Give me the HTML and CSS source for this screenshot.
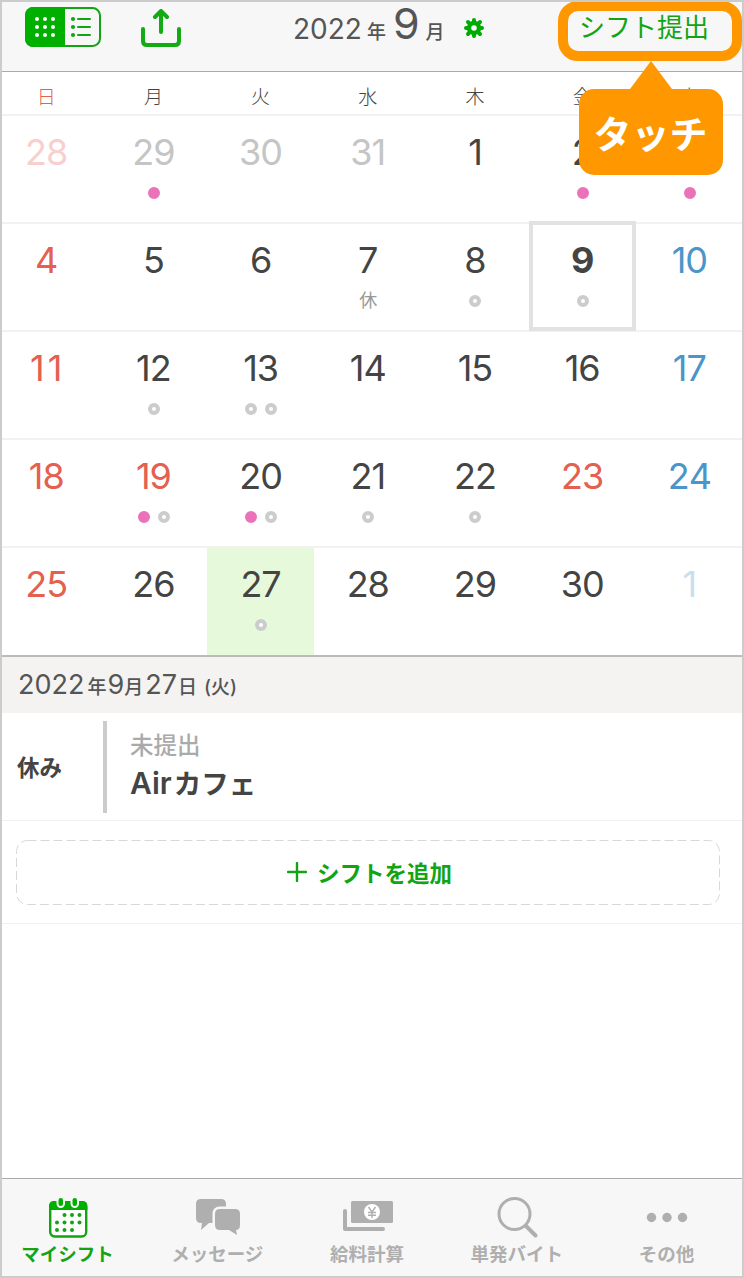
FILE: index.html
```html
<!DOCTYPE html>
<html lang="ja">
<head>
    <meta charset="UTF-8">
    <meta name="viewport" content="width=device-width, initial-scale=1.0">
    <title>シフト</title>
    <link rel="stylesheet" href="styles.css">
</head>
<body>
    <div class="app">
        <header class="header">
            <div class="view-switch">
                <svg width="76" height="40" viewBox="0 0 76 40">
                    <rect x="1" y="1" width="74" height="38" rx="7.5" fill="none" stroke="#13a413" stroke-width="2"/>
                    <path d="M8 0h32v40H8a8 8 0 0 1-8-8V8a8 8 0 0 1 8-8z" fill="#00b000"/>
                    <g fill="#fff">
                        <circle cx="12" cy="12" r="2"/><circle cx="20" cy="12" r="2"/><circle cx="28" cy="12" r="2"/>
                        <circle cx="12" cy="20" r="2"/><circle cx="20" cy="20" r="2"/><circle cx="28" cy="20" r="2"/>
                        <circle cx="12" cy="28" r="2"/><circle cx="20" cy="28" r="2"/><circle cx="28" cy="28" r="2"/>
                    </g>
                    <g fill="#13a413">
                        <circle cx="48" cy="12" r="2.1"/><circle cx="48" cy="20" r="2.1"/><circle cx="48" cy="28" r="2.1"/>
                    </g>
                    <path d="M53 12h12M53 20h12M53 28h12" stroke="#13a413" stroke-width="2" stroke-linecap="round"/>
                </svg>
            </div>
            <svg class="share" width="40" height="38" viewBox="0 0 40 38" fill="none" stroke="#13ab13" stroke-width="4" stroke-linecap="round">
                <path d="M2 20v12q0 4 4 4h28q4 0 4-4V20"/>
                <path d="M20 23V3M14 8l6-6 6 6" stroke-linejoin="round"/>
            </svg>
            <div class="month"><span class="year">2022</span><span class="unit unit-year">年</span><span class="big">9</span><span class="unit unit-month">月</span></div>
            <svg class="gear" width="20" height="20" viewBox="-10 -10 20 20">
                <g fill="none" stroke="#00ab00">
                    <circle r="5" stroke-width="4.4"/>
                    <path d="M0-6V-8M0 6V8M-6 0H-8M6 0H8M-4.4-4.4L-6-6M4.4-4.4L6-6M-4.4 4.4L-6 6M4.4 4.4L6 6" stroke-width="4" stroke-linecap="round"/>
                </g>
            </svg>
            <div class="submit">シフト提出</div>
            <div class="highlight"></div>
            <div class="callout">タッチ</div>
        </header>

        <div class="weekdays">
            <div class="red">日</div><div>月</div><div>火</div><div>水</div><div>木</div><div>金</div><div>土</div>
        </div>

        <div class="calendar">
            <div class="day red faded"><span>28</span></div>
            <div class="day faded"><span>29</span><p><i class="dot pink"></i></p></div>
            <div class="day faded"><span>30</span></div>
            <div class="day faded"><span>31</span></div>
            <div class="day"><span>1</span></div>
            <div class="day"><span>2</span><p><i class="dot pink"></i></p></div>
            <div class="day blue"><span>3</span><p><i class="dot pink"></i></p></div>

            <div class="day red"><span>4</span></div>
            <div class="day"><span>5</span></div>
            <div class="day"><span>6</span></div>
            <div class="day"><span>7</span><p>休</p></div>
            <div class="day"><span>8</span><p><i class="dot"></i></p></div>
            <div class="day today"><span>9</span><p><i class="dot"></i></p></div>
            <div class="day blue"><span>10</span></div>

            <div class="day red wide"><span>11</span></div>
            <div class="day"><span>12</span><p><i class="dot"></i></p></div>
            <div class="day"><span>13</span><p><i class="dot"></i><i class="dot"></i></p></div>
            <div class="day"><span>14</span></div>
            <div class="day"><span>15</span></div>
            <div class="day"><span>16</span></div>
            <div class="day blue"><span>17</span></div>

            <div class="day red"><span>18</span></div>
            <div class="day red"><span>19</span><p><i class="dot pink"></i><i class="dot"></i></p></div>
            <div class="day"><span>20</span><p><i class="dot pink"></i><i class="dot"></i></p></div>
            <div class="day"><span>21</span><p><i class="dot"></i></p></div>
            <div class="day"><span>22</span><p><i class="dot"></i></p></div>
            <div class="day red"><span>23</span></div>
            <div class="day blue"><span>24</span></div>

            <div class="day red"><span>25</span></div>
            <div class="day"><span>26</span></div>
            <div class="day selected"><span>27</span><p><i class="dot"></i></p></div>
            <div class="day"><span>28</span></div>
            <div class="day"><span>29</span></div>
            <div class="day"><span>30</span></div>
            <div class="day blue faded"><span>1</span></div>
        </div>

        <div class="date-bar"><b>2022</b><span class="gap">年</span><b>9</b><span>月</span><b class="date">27</b><span>日</span><span class="week">(火)</span></div>

        <div class="shift">
            <div class="shift-time">休み</div>
            <div class="shift-line"></div>
            <div class="shift-info">
                <div class="status">未提出</div>
                <div class="shop"><span>Air</span>カフェ</div>
            </div>
        </div>

        <div class="add-area">
            <div class="add-button">
                <svg class="dashes" width="704" height="65" viewBox="0 0 704 65">
                    <rect x=".5" y=".5" width="703" height="64" rx="11" fill="none" stroke="#d8d8d8" stroke-dasharray="9 4"/>
                </svg>
                <svg width="20" height="20" viewBox="0 0 20 20"><path d="M10 1v18M1 10h18" stroke="#13a413" stroke-width="2.4" stroke-linecap="round"/></svg>
                <span>シフトを追加</span>
            </div>
        </div>

        <nav class="tabs">
            <div class="tab active">
                <svg width="40" height="40" viewBox="0 0 40 40">
                    <rect x="2.2" y="4.5" width="36" height="34" rx="4.5" fill="#fff" stroke="#13a413" stroke-width="2.4"/>
                    <path d="M1 12V8q0-5 5-5h28.400q5 0 5 5v4z" fill="#00b000"/>
                    <g fill="#00b000" stroke="#f7f7f7" stroke-width="2">
                        <rect x="9.500" y="-1" width="6.500" height="10" rx="3.200"/>
                        <rect x="23.500" y="-1" width="6.500" height="10" rx="3.200"/>
                    </g>
                    <g fill="#13a413">
                        <circle cx="16.500" cy="17" r="2"/><circle cx="24" cy="17" r="2"/><circle cx="31.500" cy="17" r="2"/>
                        <circle cx="9" cy="24.500" r="2"/><circle cx="16.500" cy="24.500" r="2"/><circle cx="24" cy="24.500" r="2"/><circle cx="31.500" cy="24.500" r="2"/>
                        <circle cx="9" cy="32" r="2"/><circle cx="16.500" cy="32" r="2"/><circle cx="24" cy="32" r="2"/>
                    </g>
                </svg>
                <span>マイシフト</span>
            </div>
            <div class="tab">
                <svg width="44" height="40" viewBox="0 0 44 40" fill="#afafaf">
                    <path d="M5 1h20q5 0 5 5v12q0 7-7 7H13l-8 7 1-7H5q-5 0-5-5V6q0-5 5-5z"/>
                    <path d="M24 11h15q5 0 5 5v11q0 5-4 5l1 5-8-5h-9q-5 0-5-5V16q0-5 5-5z" stroke="#f7f7f7" stroke-width="5" paint-order="stroke"/>
                </svg>
                <span>メッセージ</span>
            </div>
            <div class="tab">
                <svg width="50" height="40" viewBox="-1 0 50 40">
                    <rect x="8" y="3" width="42" height="22" rx="1.500" fill="#afafaf"/>
                    <path d="M2 13v18h38" fill="none" stroke="#afafaf" stroke-width="4" stroke-linecap="round" stroke-linejoin="round"/>
                    <circle cx="29" cy="14" r="8" fill="#fff"/>
                    <path d="M25.500 9l3.500 5 3.500-5M29 14v6M25 14.500h8M25 17.200h8" fill="none" stroke="#afafaf" stroke-width="1.400"/>
                </svg>
                <span>給料計算</span>
            </div>
            <div class="tab">
                <svg width="42" height="40" viewBox="0 1 42 40" fill="none" stroke="#afafaf">
                    <circle cx="18.500" cy="17" r="15.500" stroke-width="3"/>
                    <path d="M30 29l9.500 9.500" stroke-width="4" stroke-linecap="round"/>
                </svg>
                <span>単発バイト</span>
            </div>
            <div class="tab">
                <svg width="42" height="40" viewBox="0 0 42 40" fill="#afafaf"><circle cx="5.500" cy="19.500" r="4.700"/><circle cx="21" cy="19.500" r="4.700"/><circle cx="36.500" cy="19.500" r="4.700"/></svg>
                <span>その他</span>
            </div>
        </nav>
    </div>
</body>
</html>
```
FILE: styles.css
```css
* {
    box-sizing: border-box;
}
body {
    margin: 0;
    font-family: Inter, "Noto Sans CJK JP", sans-serif;
    color: #444;
    background-color: #fff;
}
.app {
    display: flex;
    flex-direction: column;
    width: 744px;
    height: 1278px;
    border: 2px solid #ccc;
    overflow: hidden;
}
.header {
    position: relative;
    display: flex;
    align-items: flex-start;
    flex: none;
    height: 70px;
    padding: 5px 0 0 23px;
    background-color: #f7f7f7;
    border-bottom: 1px solid #aaa;
}
.header svg {
    display: block;
    flex: none;
}
.share {
    margin: 2px 0 0 40px;
}
.month {
    display: flex;
    align-items: baseline;
    width: 150px;
    height: 44px;
    margin: -6px 0 0 112px;
    color: #555;
    line-height: 44px;
    white-space: nowrap;
}
.year {
    font-size: 28px;
}
.unit {
    font-size: 19px;
    font-weight: 500;
}
.unit-year {
    margin: 0 7px 0 5px;
}
.unit-month {
    margin-left: 6px;
}
.big {
    font-size: 43px;
}
.gear {
    margin: 11px 0 0 21px;
}
.submit {
    margin: 1px 0 0 95px;
    color: #13a413;
    font-size: 26px;
    line-height: 40px;
    white-space: nowrap;
}
.highlight {
    position: absolute;
    top: -1px;
    left: 556px;
    width: 184px;
    height: 60px;
    border: 10px solid #ff9800;
    border-radius: 20px;
}
.callout {
    position: absolute;
    z-index: 2;
    top: 87px;
    left: 577px;
    width: 144px;
    height: 86px;
    padding-right: 1px;
    border-radius: 15px;
    background-color: #ff9800;
    color: #fff;
    font-size: 38px;
    font-weight: bold;
    line-height: 90px;
    text-align: center;
}
.callout::before {
    content: "";
    position: absolute;
    left: 51px;
    bottom: 100%;
    border: solid transparent;
    border-width: 0 21px 28px;
    border-bottom-color: #ff9800;
}
.weekdays, .calendar {
    display: grid;
    grid-template-columns: repeat(7, 107.2px);
    flex: none;
    margin-left: -9.4px;
}
.weekdays {
    height: 44px;
    border-bottom: 2px solid #f2f2f1;
    font-size: 19px;
    font-weight: 300;
    line-height: 51px;
    text-align: center;
}
.calendar {
    grid-auto-rows: 108px;
    height: 541px;
    border-bottom: 2px solid #bbb;
}
.day {
    position: relative;
    border-bottom: 2px solid #f2f2f1;
    padding-top: 13px;
    font-size: 36px;
    line-height: 46px;
    letter-spacing: -1px;
    font-kerning: none;
    text-align: center;
}
.day:nth-last-child(-n+7) {
    height: 107px;
    border-bottom: none;
}
.day span {
    display: block;
}
.day.wide {
    padding-left: 3px;
    letter-spacing: 3px;
}
.day p {
    display: flex;
    justify-content: center;
    align-items: center;
    gap: 8px;
    height: 20px;
    margin: 8px 0 0;
    padding-left: 1px;
    color: #999;
    font-size: 18px;
    line-height: 20px;
    letter-spacing: 0;
}
.dot {
    width: 12px;
    height: 12px;
    border: 4px solid #ccc;
    border-radius: 50%;
    background-color: #fff;
}
.dot.pink {
    border-color: #ea72b9;
    background-color: #ea72b9;
}
.red {
    color: #e4604f;
}
.blue {
    color: #4b95c8;
}
.faded span {
    color: #c5c5c5;
}
.faded.red span {
    color: #f8cfcc;
}
.faded.blue span {
    color: #c7dfee;
}
.today {
    font-weight: bold;
}
.today::after {
    content: "";
    position: absolute;
    inset: -3px 0 -1px 0;
    border: 4px solid #e2e2e0;
}
.selected {
    background-color: #e6fadb;
}
.date-bar {
    flex: none;
    height: 56px;
    padding-left: 16px;
    background-color: #f4f3f1;
    color: #555;
    font-size: 19px;
    font-weight: 500;
    line-height: 55px;
    white-space: nowrap;
}
.date-bar b {
    font-size: 27px;
    font-weight: normal;
}
.date-bar .gap {
    margin: 0 1px 0 3px;
}
.date-bar .date {
    margin: 0 1px 0 2px;
}
.date-bar .week {
    margin-left: 7px;
}
.shift {
    display: flex;
    align-items: center;
    flex: none;
    height: 108px;
    border-bottom: 1px solid #f0f0f0;
}
.shift-time {
    width: 101px;
    padding: 0 0 2px 15px;
    font-size: 22.5px;
    font-weight: bold;
}
.shift-line {
    width: 4px;
    height: 92px;
    background-color: #ccc;
}
.shift-info {
    margin-left: 23px;
}
.status {
    color: #aaa;
    font-size: 23.5px;
    font-weight: 500;
    line-height: 34px;
}
.shop {
    font-size: 27.5px;
    font-weight: bold;
    line-height: 40px;
}
.shop span {
    margin-right: 2px;
    font-size: 30px;
    font-weight: 600;
}
.add-area {
    flex: none;
    height: 103px;
    padding: 19px 0 0 14px;
    border-bottom: 1px solid #f0f0f0;
}
.add-button {
    position: relative;
    display: flex;
    justify-content: center;
    align-items: center;
    gap: 10px;
    width: 704px;
    height: 65px;
    padding: 0 0 2px 3px;
    color: #13a413;
    font-size: 22.5px;
    font-weight: bold;
}
.dashes {
    position: absolute;
    top: 0;
    left: 0;
}
.tabs {
    display: grid;
    grid-template-columns: repeat(5, 149.8px);
    flex: none;
    height: 98px;
    margin: auto 0 0 -9px;
    background-color: #f7f7f7;
    border-top: 1px solid #aaa;
}
.tab {
    display: flex;
    flex-direction: column;
    align-items: center;
    padding-top: 19px;
    color: #afafaf;
    font-size: 18.5px;
    font-weight: bold;
    white-space: nowrap;
}
.tab svg {
    flex: none;
    height: 40px;
    overflow: visible;
}
.tab span {
    margin-right: 1px;
    line-height: 32px;
}
.tab.active {
    color: #13a413;
}
```
